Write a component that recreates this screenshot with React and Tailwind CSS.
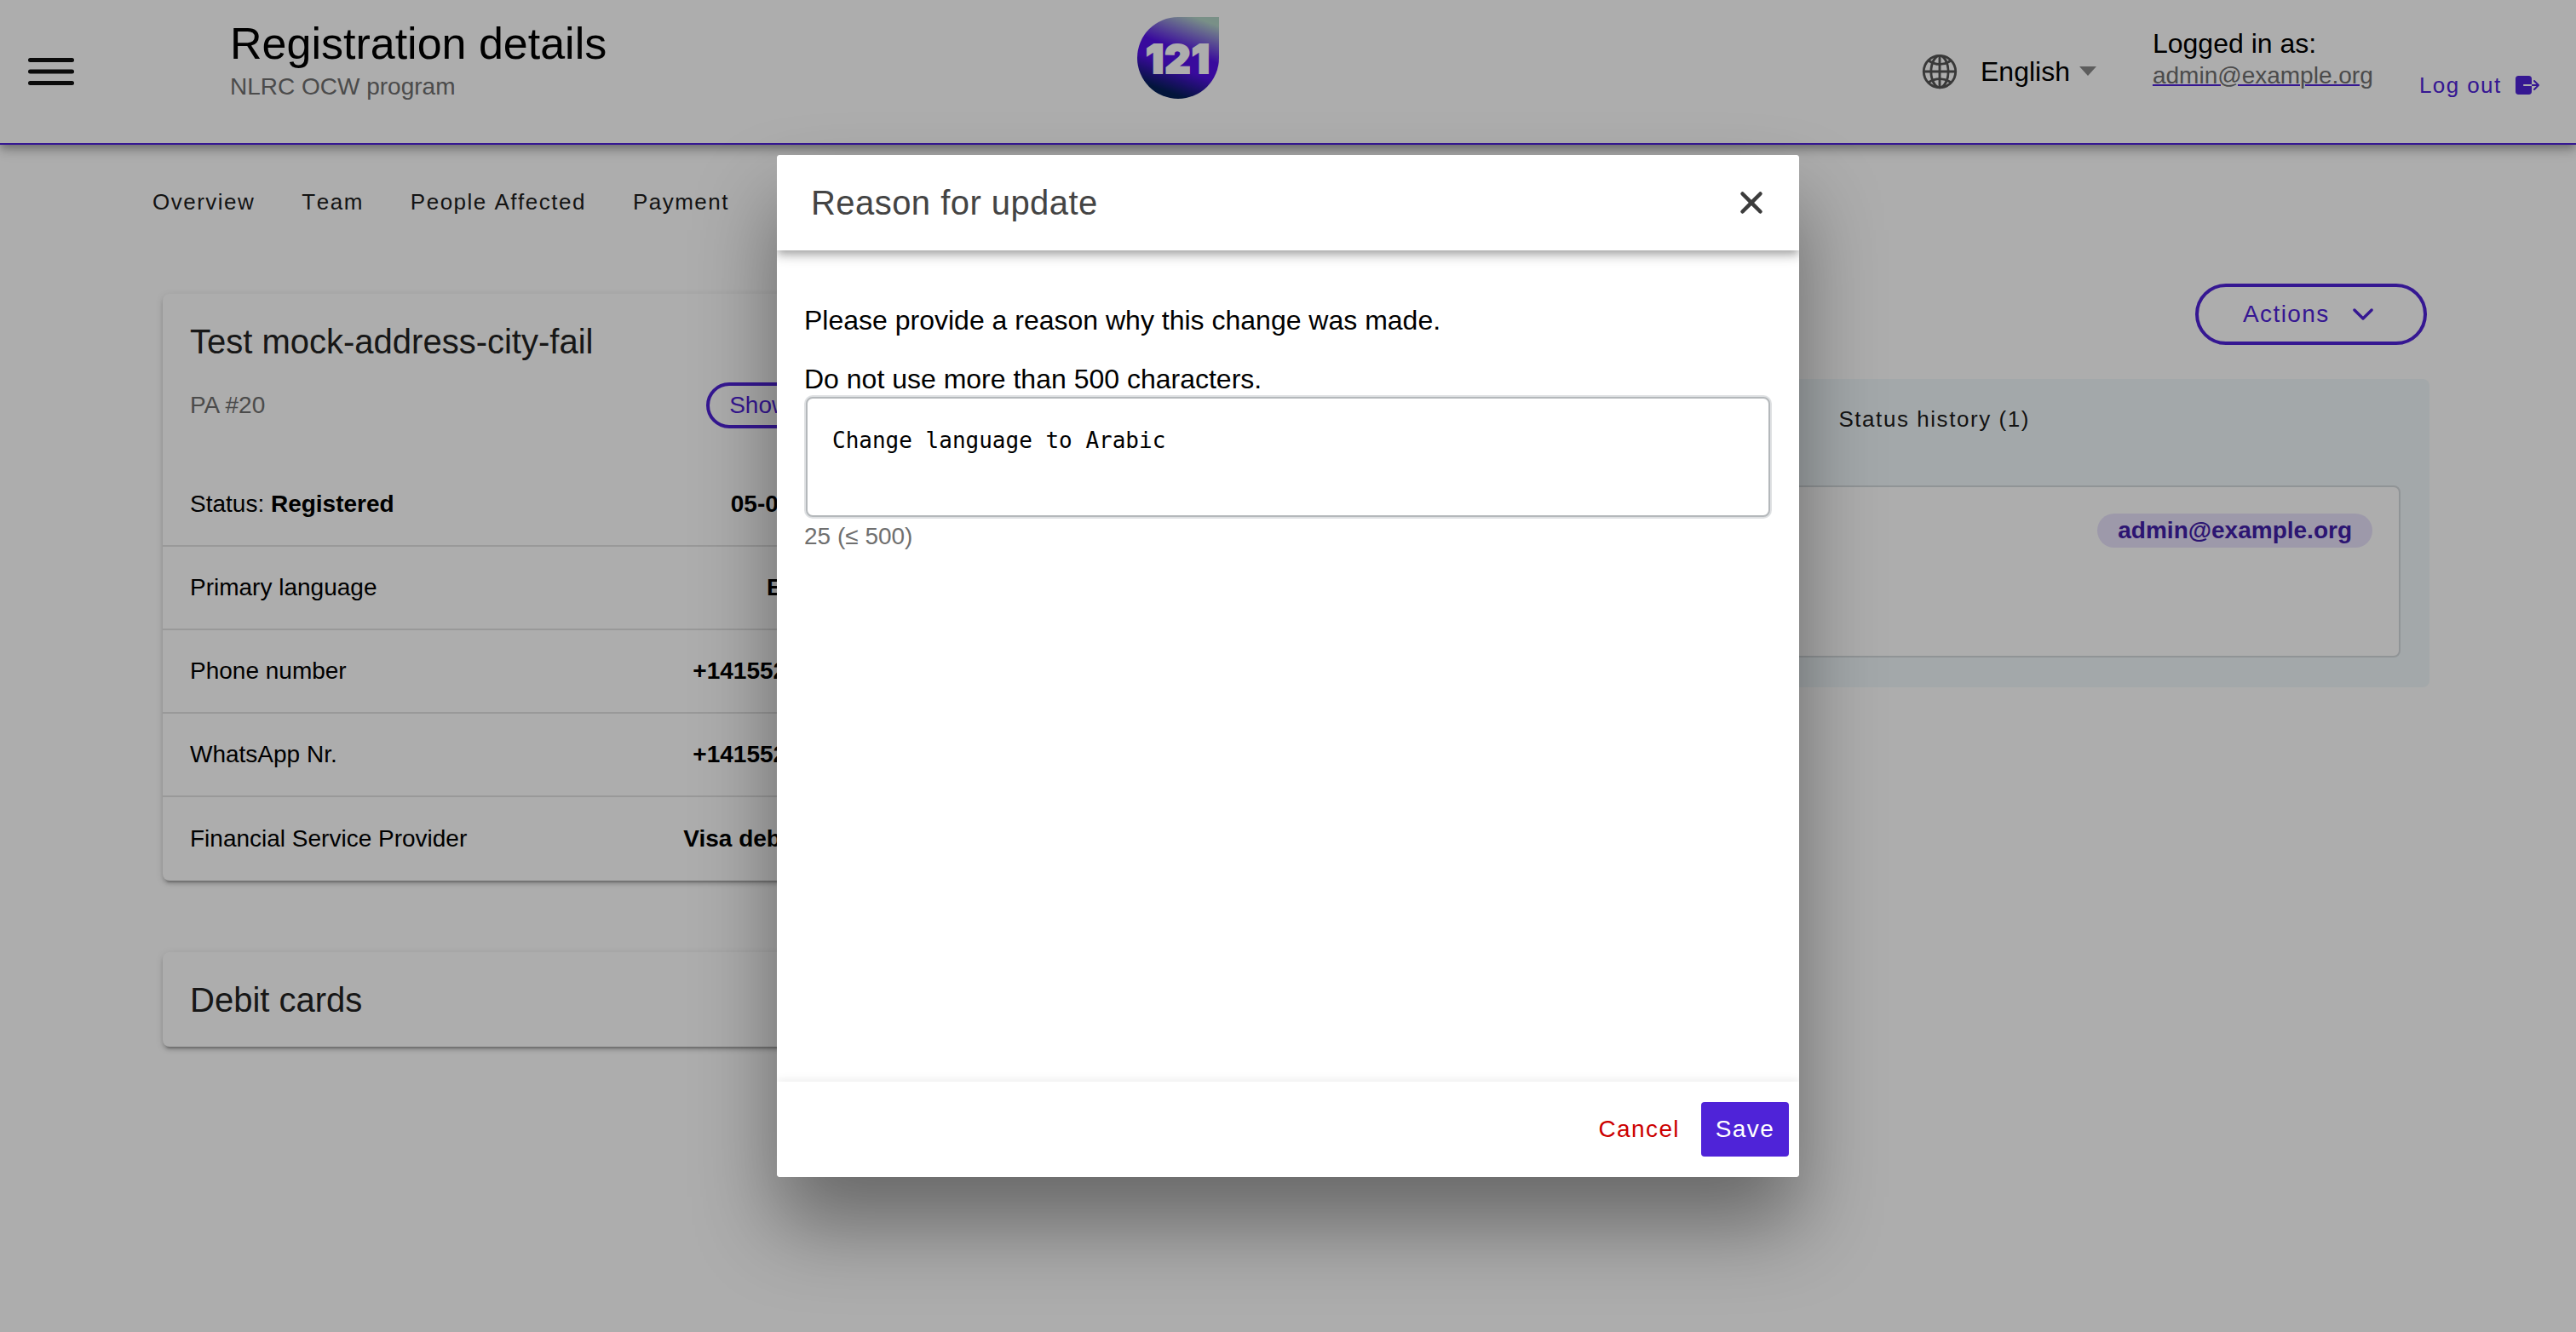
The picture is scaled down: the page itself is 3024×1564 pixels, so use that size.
import { IoChevronDown, IoClose, IoExit, IoGlobeOutline } from 'react-icons/io5';

const rows = [
  { label: 'Primary language', value: 'English' },
  { label: 'Phone number', value: '+14155238886' },
  { label: 'WhatsApp Nr.', value: '+14155238886' },
  { label: 'Financial Service Provider', value: 'Visa debit card' },
];

const cardShadow =
  'shadow-[0_6px_2px_-4px_rgba(0,0,0,0.2),0_4px_4px_0_rgba(0,0,0,0.14),0_2px_10px_0_rgba(0,0,0,0.12)]';

function Header() {
  return (
    <header className="flex h-[170px] items-start border-b-2 border-[#4f23d8] bg-white shadow-[0_4px_8px_-2px_rgba(0,0,0,0.2),0_8px_10px_0_rgba(0,0,0,0.14),0_2px_20px_0_rgba(0,0,0,0.12)]">
      <svg viewBox="0 0 54 32" className="ml-[33px] mt-[68px] h-[32px] w-[54px]">
        <path d="M2.5 2.5h49M2.5 16h49M2.5 29.5h49" stroke="#111" strokeWidth="5" strokeLinecap="round" fill="none" />
      </svg>

      <div className="ml-[183px] w-[1065px] pt-[21px]">
        <h1 className="text-[52px] leading-[60px] text-black">Registration details</h1>
        <p className="mt-[5px] text-[28px] leading-[32px] text-[#6f6f6f]">NLRC OCW program</p>
      </div>

      <div className="mt-[20px] flex h-[96px] w-[96px] items-center justify-center rounded-[48px] rounded-tr-none bg-[linear-gradient(200deg,#b3d5c8_8%,#5510e8_42%,#5510e8_58%,#031f58_84%)]">
        <span className="font-['Inter'] text-[47px] font-black leading-none tracking-[1px] text-white [-webkit-text-stroke:2px_#ffffff]">
          121
        </span>
      </div>

      <IoGlobeOutline className="ml-[823px] mt-[61px] h-[46px] w-[46px] text-[#555555]" />
      <span className="ml-[25px] mt-[64px] text-[32px] leading-[40px] text-black">English</span>
      <span className="ml-[11px] mt-[78px] h-0 w-0 border-x-[10px] border-t-[11px] border-x-transparent border-t-[#8a8a8a]" />

      <div className="ml-[66px] mt-[31px] w-[313px]">
        <p className="text-[32px] leading-[40px] text-black">Logged in as:</p>
        <a className="mt-[2px] block text-[28px] leading-[32px] text-[#6f6f6f] underline decoration-[#4f23d8] decoration-2">
          admin@example.org
        </a>
      </div>

      <a className="mt-[84px] flex items-center text-[26px] leading-[32px] tracking-[1.4px] text-[#4f23d8]">
        Log out
        <IoExit className="ml-[14px] h-[32px] w-[32px]" />
      </a>
    </header>
  );
}

function DetailsCard() {
  return (
    <section className={`rounded-[8px] bg-white ${cardShadow}`}>
      <div className="pl-[32px] pr-[35px] pt-[32px]">
        <h2 className="text-[40px] leading-[48px] text-[#222222]">Test mock-address-city-fail</h2>
        <div className="mt-[24px] flex items-center justify-between">
          <span className="text-[28px] leading-[32px] text-[#6f6f6f]">PA #20</span>
          <button className="h-[54px] rounded-full border-4 border-[#4f23d8] pl-[23px] pr-[35px] text-[28px] text-[#4f23d8]">
            Show all
          </button>
        </div>
      </div>
      <div className="mt-[41px] flex h-[98px] items-center justify-between border-b-2 border-[#e2e2e2] pl-[32px] pr-[35px] text-[28px] text-black">
        <span>
          Status: <b>Registered</b>
        </span>
        <b>05-01-2024</b>
      </div>
      {rows.map((row, i) => (
        <div
          key={row.label}
          className={`flex h-[98px] items-center justify-between pl-[32px] pr-[35px] text-[28px] text-black ${
            i < rows.length - 1 ? 'border-b-2 border-[#e2e2e2]' : ''
          }`}
        >
          <span>{row.label}</span>
          <b>{row.value}</b>
        </div>
      ))}
    </section>
  );
}

function ReasonModal() {
  return (
    <div className="absolute inset-0 flex items-center justify-center bg-black/[0.32]">
      <div className="flex h-[1200px] w-[1200px] flex-col overflow-hidden rounded-[4px] bg-white shadow-[0_56px_96px_rgba(0,0,0,0.4)]">
        <div className="relative z-10 flex h-[112px] shrink-0 items-center justify-between bg-white pl-[40px] pr-[32px] shadow-[0_4px_8px_-2px_rgba(0,0,0,0.2),0_8px_10px_0_rgba(0,0,0,0.14),0_2px_20px_0_rgba(0,0,0,0.12)]">
          <h2 className="text-[40px] leading-[48px] tracking-[0.45px] text-[#444444]">Reason for update</h2>
          <IoClose className="h-[48px] w-[48px] text-[#3c3c3c]" />
        </div>

        <div className="flex-1 px-[32px] pt-[62px]">
          <p className="text-[32px] leading-[40px] text-black">Please provide a reason why this change was made.</p>
          <p className="mt-[29px] text-[32px] leading-[40px] text-black">Do not use more than 500 characters.</p>
          <div className="mx-[2px] mt-[1px] h-[141px] w-[1132px] rounded-[8px] border-2 border-[#b4b8bb] bg-white px-[29px] pt-[33px] shadow-[0_0_0_2px_#dfe1e3]">
            <span className="font-['DejaVu_Sans_Mono'] text-[26px] leading-[32px] text-black">Change language to Arabic</span>
          </div>
          <p className="mt-[7px] text-[28px] leading-[32px] text-[#6f6f6f]">25 (≤ 500)</p>
        </div>

        <div className="relative z-10 flex h-[112px] shrink-0 items-center justify-end bg-white pr-[12px] shadow-[0_-2px_10px_rgba(0,0,0,0.08)]">
          <button className="mr-[25px] text-[28px] tracking-[1.4px] text-[#cc0000]">Cancel</button>
          <button className="h-[64px] w-[103px] rounded-[4px] bg-[#4f23d8] text-[28px] tracking-[1.4px] text-white">Save</button>
        </div>
      </div>
    </div>
  );
}

export default function App() {
  return (
    <div className="relative h-screen overflow-hidden bg-white font-['Liberation_Sans',sans-serif]">
      <Header />

      <nav className="ml-[179px] mt-[51px] flex gap-[55px] text-[26px] leading-[32px] tracking-[1.5px] text-[#1c1c1c] [font-kerning:none]">
        <span>Overview</span>
        <span>Team</span>
        <span>People Affected</span>
        <span>Payment</span>
      </nav>

      <main className="flex items-start pl-[191px] pr-[172px]">
        <div className="mt-[92px] w-[845px]">
          <DetailsCard />
          <section className={`mt-[84px] flex h-[111px] items-center rounded-[8px] bg-white px-[32px] ${cardShadow}`}>
            <h2 className="text-[40px] leading-[48px] text-[#222222]">Debit cards</h2>
          </section>
        </div>

        <div className="ml-[64px] mt-[80px] flex flex-1 flex-col">
          <button className="mr-[3px] flex h-[72px] w-[272px] items-center self-end rounded-full border-4 border-[#4f23d8] pl-[52px] text-[28px] tracking-[1.4px] text-[#4f23d8]">
            Actions
            <IoChevronDown className="ml-[21px] h-[36px] w-[36px]" />
          </button>

          <section className="mt-[40px] rounded-[8px] bg-[#f1f8fb] pb-[35px] pl-[32px] pr-[34px] pt-[31px]">
            <div className="flex justify-end pr-[435px] text-[26px] leading-[32px] tracking-[1.56px] text-[#1c1c1c]">
              <span>Status history (1)</span>
            </div>
            <div className="mt-[62px] flex h-[202px] items-start justify-end rounded-[8px] border-2 border-[#d5dadd] bg-white pr-[31px] pt-[31px]">
              <span className="flex h-[40px] items-center rounded-full bg-[#e8e2fb] px-[24px] text-[28px] font-bold text-[#4120a8]">
                admin@example.org
              </span>
            </div>
          </section>
        </div>
      </main>

      <ReasonModal />
    </div>
  );
}
